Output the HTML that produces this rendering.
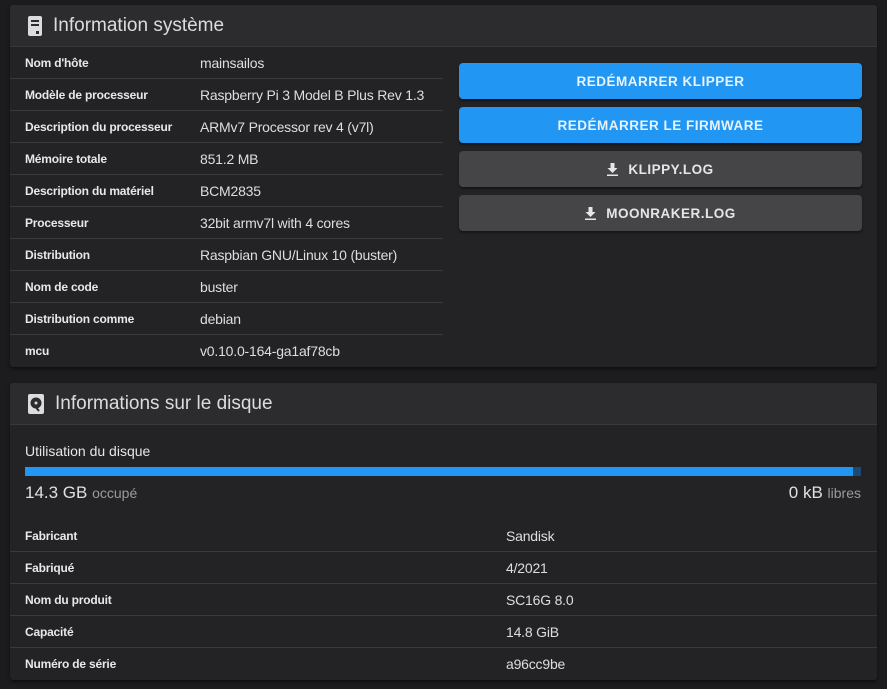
<!DOCTYPE html>
<html><head><meta charset="utf-8"><style>
*{margin:0;padding:0;box-sizing:border-box}
body{width:887px;height:689px;background:#1c1c1e;font-family:"Liberation Sans",sans-serif;color:#e6e6e6;position:relative;overflow:hidden}
.card{position:absolute;left:10px;width:867px;background:#232325;border-radius:3px;box-shadow:0 2px 3px rgba(0,0,0,.5)}
.hdr{height:42px;background:#2c2c2f;border-bottom:1px solid #38383b;display:flex;align-items:center;padding-left:18px;font-size:19px;color:#dcdcdc;border-radius:3px 3px 0 0}
.hdr svg{margin-right:11px}
.row{position:absolute;height:32px;border-bottom:1px solid #3a3a3d;display:flex;align-items:center;font-size:14px}
.row b{position:absolute;left:15px;font-size:12px;font-weight:bold;color:#e8e8e8;letter-spacing:-0.2px}
.row span{position:absolute;color:#dedede;letter-spacing:-0.2px}
.btn{position:absolute;left:449px;width:403px;height:36px;border-radius:4px;display:flex;align-items:center;justify-content:center;font-weight:bold;font-size:13.5px;letter-spacing:0.5px;box-shadow:0 2px 2px rgba(0,0,0,.4)}
.blue{background:#2196f3;color:#e8f2fb}
.grey{background:#454548;color:#e6e6e6}
.btn svg{margin-right:10px}
</style></head><body>
<div class="card" style="top:5px;height:362px">
<div class="hdr"><svg width="14" height="20" viewBox="0 0 14 20"><rect x="0" y="0" width="14" height="20" rx="2" fill="#dcdcdc"/><rect x="3" y="4" width="8" height="2" fill="#2c2c2f"/><rect x="3" y="8" width="8" height="2" fill="#2c2c2f"/><rect x="8" y="15" width="3" height="3" fill="#2c2c2f"/></svg>Information système</div>
</div>
<div class="btn blue" style="left:459px;top:63px">REDÉMARRER KLIPPER</div>
<div class="btn blue" style="left:459px;top:107px">REDÉMARRER LE FIRMWARE</div>
<div class="btn grey" style="left:459px;top:151px"><svg width="11" height="13" viewBox="0 0 11 13"><path d="M3.5 0h4v5h3l-5 5-5-5h3z" fill="#e6e6e6"/><rect x="0" y="11.5" width="11" height="1.5" fill="#e6e6e6"/></svg>KLIPPY.LOG</div>
<div class="btn grey" style="left:459px;top:195px"><svg width="11" height="13" viewBox="0 0 11 13"><path d="M3.5 0h4v5h3l-5 5-5-5h3z" fill="#e6e6e6"/><rect x="0" y="11.5" width="11" height="1.5" fill="#e6e6e6"/></svg>MOONRAKER.LOG</div>

<div class="card" style="top:383px;height:297px">
<div class="hdr"><svg width="16" height="20" viewBox="0 0 16 20"><rect x="0" y="0" width="16" height="20" rx="2" fill="#dcdcdc"/><circle cx="8" cy="9" r="5.5" fill="#2c2c2f"/><circle cx="8" cy="9" r="1.5" fill="#dcdcdc"/><path d="M6 11l5 6" stroke="#2c2c2f" stroke-width="2"/></svg>Informations sur le disque</div>
<div style="position:absolute;left:15px;top:60px;font-size:14px;color:#e6e6e6">Utilisation du disque</div>
<div style="position:absolute;left:15px;top:84px;width:836px;height:9px;background:#1d4a72"><div style="width:828px;height:9px;background:#2196f3"></div></div>
<div style="position:absolute;left:15px;top:100px;font-size:17px;color:#e0e0e0">14.3 GB <span style="font-size:14px;color:#9a9a9a">occupé</span></div>
<div style="position:absolute;right:16px;top:100px;font-size:17px;color:#e0e0e0">0 kB <span style="font-size:14px;color:#9a9a9a">libres</span></div>
</div>

<div class="row" style="left:10px;width:433px;top:47px"><b>Nom d'hôte</b><span style="left:190px">mainsailos</span></div>
<div class="row" style="left:10px;width:433px;top:79px"><b>Modèle de processeur</b><span style="left:190px">Raspberry Pi 3 Model B Plus Rev 1.3</span></div>
<div class="row" style="left:10px;width:433px;top:111px"><b>Description du processeur</b><span style="left:190px">ARMv7 Processor rev 4 (v7l)</span></div>
<div class="row" style="left:10px;width:433px;top:143px"><b>Mémoire totale</b><span style="left:190px">851.2 MB</span></div>
<div class="row" style="left:10px;width:433px;top:175px"><b>Description du matériel</b><span style="left:190px">BCM2835</span></div>
<div class="row" style="left:10px;width:433px;top:207px"><b>Processeur</b><span style="left:190px">32bit armv7l with 4 cores</span></div>
<div class="row" style="left:10px;width:433px;top:239px"><b>Distribution</b><span style="left:190px">Raspbian GNU/Linux 10 (buster)</span></div>
<div class="row" style="left:10px;width:433px;top:271px"><b>Nom de code</b><span style="left:190px">buster</span></div>
<div class="row" style="left:10px;width:433px;top:303px"><b>Distribution comme</b><span style="left:190px">debian</span></div>
<div class="row" style="left:10px;width:433px;top:335px;border:none"><b>mcu</b><span style="left:190px">v0.10.0-164-ga1af78cb</span></div>

<div class="row" style="left:10px;width:867px;top:520px"><b>Fabricant</b><span style="left:496px">Sandisk</span></div>
<div class="row" style="left:10px;width:867px;top:552px"><b>Fabriqué</b><span style="left:496px">4/2021</span></div>
<div class="row" style="left:10px;width:867px;top:584px"><b>Nom du produit</b><span style="left:496px">SC16G 8.0</span></div>
<div class="row" style="left:10px;width:867px;top:616px"><b>Capacité</b><span style="left:496px">14.8 GiB</span></div>
<div class="row" style="left:10px;width:867px;top:648px;border:none"><b>Numéro de série</b><span style="left:496px">a96cc9be</span></div>
</body></html>
